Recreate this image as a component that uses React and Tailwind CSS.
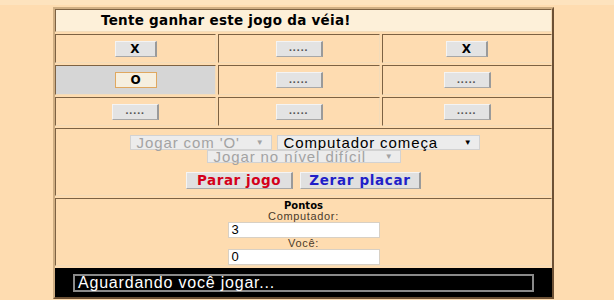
import React from "react";

const cellBorder = "border border-t-[#7d6243] border-l-[#7d6243] border-b-[#f3dcba] border-r-[#f3dcba]";

function Btn({ label, active }) {
  const isDots = label === ".....";
  return (
    <div
      className={
        "flex items-center justify-center h-[16px] " +
        (isDots ? "w-[47px] " : "w-[42px] ") +
        (active
          ? "bg-[#f6efdf] border border-[#e0a860] "
          : "bg-[#e3e3e3] border-t border-l border-t-[#f4f4f4] border-l-[#f4f4f4] border-r-2 border-b border-r-[#9a9a9a] border-b-[#a8a8a8] ")
      }
    >
      <span
        className={
          "font-['DejaVu_Sans',sans-serif] font-bold leading-none " +
          (isDots ? "text-[9px] text-[#555] tracking-[0.5px]" : "text-[12px] text-black")
        }
      >
        {label}
      </span>
    </div>
  );
}

function Cell({ label, gray, active }) {
  return (
    <div className={"flex items-center justify-center " + cellBorder + (gray ? " bg-[#d6d6d6]" : " bg-[#fedcb1]")}>
      <Btn label={label} active={active} />
    </div>
  );
}

function Sel({ text, disabled, w }) {
  return (
    <div
      className={
        "flex items-center justify-between pl-[6px] pr-[6px] bg-[#ececec] border border-[#d2d2d2] font-['Liberation_Sans',sans-serif] text-[15px] leading-none tracking-[0.06em] " +
        w +
        (disabled ? " text-[#a3a3a3]" : " text-black")
      }
    >
      <span>{text}</span>
      <span className={"text-[8px] " + (disabled ? "text-[#a3a3a3]" : "text-black")}>▼</span>
    </div>
  );
}

export default function App() {
  return (
    <div className="w-[614px] h-[300px] bg-[#fedcb0] overflow-hidden relative">
      <div className="h-[5px] bg-[#fde3be]" />
      <div className="pl-[53px] pt-[2px]">
        <div className="w-[501px] border-2 border-t-[#cfae83] border-l-[#cfae83] border-r-[#6d5135] border-b-[#6d5135] flex flex-col gap-[2px] bg-[#fedcb0]">
          <div className={"h-[23px] bg-[#fdf0d9] flex items-center pl-[45px] " + cellBorder}>
            <span className="font-['DejaVu_Sans',sans-serif] font-bold text-[13.5px] leading-none text-black tracking-[0.02em]">
              Tente ganhar este jogo da véia!
            </span>
          </div>
          <div className="grid grid-cols-[161px_162px_1fr] grid-rows-[29px_30px_29px] gap-[2px]">
            <Cell label="X" />
            <Cell label="....." />
            <Cell label="X" />
            <Cell label="O" gray active />
            <Cell label="....." />
            <Cell label="....." />
            <Cell label="....." />
            <Cell label="....." />
            <Cell label="....." />
          </div>
          <div className={"h-[68px] flex flex-col items-center pt-[6px] " + cellBorder}>
            <div className="flex gap-[5px] pl-[2px]">
              <Sel text="Jogar com 'O'" disabled w="w-[142px] h-[15px]" />
              <Sel text="Computador começa" w="w-[203px] h-[15px]" />
            </div>
            <Sel text="Jogar no nível difícil" disabled w="w-[194px] h-[13px] mt-[0px]" />
            <div className="flex gap-[7px] mt-[9px]">
              <div className="w-[107px] h-[17px] flex items-center justify-center bg-[#e0e0e0] border-t border-l border-t-[#f4f4f4] border-l-[#f4f4f4] border-r-2 border-b border-r-[#9a9a9a] border-b-[#a8a8a8]">
                <span className="font-['DejaVu_Sans',sans-serif] font-bold text-[13.5px] leading-none tracking-[0.04em] text-[#d4001a]">Parar jogo</span>
              </div>
              <div className="w-[121px] h-[17px] flex items-center justify-center bg-[#e0e0e0] border-t border-l border-t-[#f4f4f4] border-l-[#f4f4f4] border-r-2 border-b border-r-[#9a9a9a] border-b-[#a8a8a8]">
                <span className="font-['DejaVu_Sans',sans-serif] font-bold text-[13.5px] leading-none tracking-[0.05em] text-[#1f1fc8]">Zerar placar</span>
              </div>
            </div>
          </div>
          <div className={"h-[68px] flex flex-col items-center pt-[1px] " + cellBorder}>
            <span className="font-['DejaVu_Sans',sans-serif] font-bold text-[10px] leading-[11px] text-black">Pontos</span>
            <span className="font-['Liberation_Sans',sans-serif] text-[11px] leading-[11px] text-[#4a3a2a] tracking-[0.06em]">Computador:</span>
            <div className="w-[152px] h-[16px] bg-white border border-[#d8d0c4] flex items-center pl-[3px] font-['Liberation_Sans',sans-serif] text-[13px] text-black">3</div>
            <span className="font-['Liberation_Sans',sans-serif] text-[11px] leading-[11px] text-[#4a3a2a] tracking-[0.06em]">Você:</span>
            <div className="w-[152px] h-[16px] bg-white border border-[#d8d0c4] flex items-center pl-[3px] font-['Liberation_Sans',sans-serif] text-[13px] text-black">0</div>
          </div>
          <div className="h-[29px] bg-black flex items-center pl-[18px]">
            <div className="w-[461px] h-[18px] border-2 border-[#8a8a8a] bg-black flex items-center pl-[3px]">
              <span className="font-['Liberation_Sans',sans-serif] text-[16px] leading-none text-white tracking-[0.05em]">Aguardando você jogar...</span>
            </div>
          </div>
        </div>
      </div>
    </div>
  );
}
